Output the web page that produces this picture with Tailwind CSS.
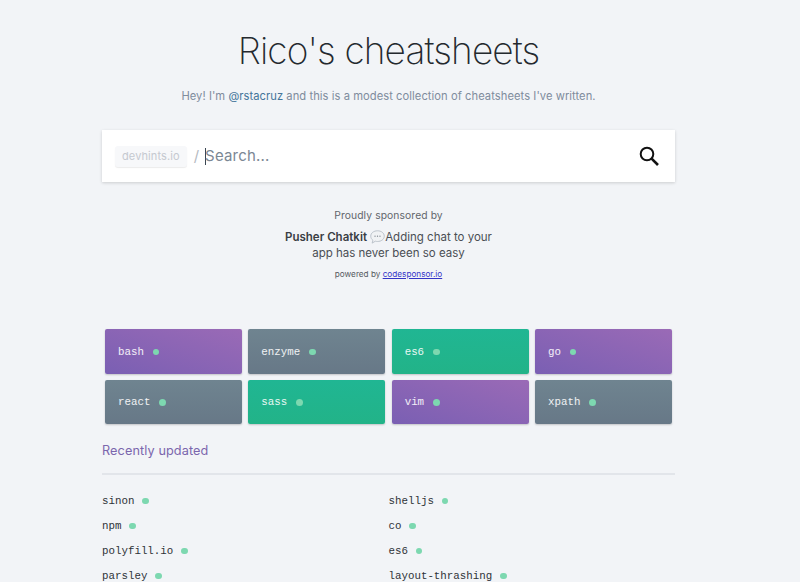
<!DOCTYPE html>
<html lang="en">
<head>
  <meta charset="UTF-8" />
  <title>Rico's cheatsheets</title>
  <script src="https://cdn.jsdelivr.net/npm/@tailwindcss/browser@4"></script>
</head>
<body class="bg-[#f2f4f7] h-[582px] overflow-hidden font-['Inter',sans-serif]">
  <div class="w-[573px] ml-[102px]">

    <!-- Header -->
    <h1 class="pt-[28px] h-[76px] text-center text-[37px] leading-[46px] font-extralight tracking-[-0.85px] text-[#24292e] whitespace-nowrap">Rico's cheatsheets</h1>
    <p class="mt-[11px] h-[18px] text-center text-[11.2px] leading-[18px] tracking-[0.05px] text-[#7f8c9d] whitespace-nowrap">Hey! I'm <a class="text-[#44749a]">@rstacruz</a> and this is a modest collection of cheatsheets I've written.</p>

    <!-- Search -->
    <div class="mt-[25px] h-[52px] bg-white shadow-[0_1px_3px_rgba(0,0,0,0.16)] flex items-center pl-[13px] pr-[15px]">
      <span class="h-[21px] px-[7px] rounded-[3px] bg-[#f7f8fa] shadow-[0_1px_1px_rgba(0,0,0,0.08)] text-[11px] leading-[21px] tracking-[0.1px] text-[#c5c9d0]">devhints.io</span>
      <span class="ml-[7px] text-[15px] text-[#b5bac2]">/</span>
      <span class="ml-[6px] w-px h-[17px] bg-[#3a4652]"></span>
      <span class="-ml-px pt-px text-[15px] tracking-[0.2px] text-[#7b8794]">Search...</span>
      <svg class="ml-auto" width="22" height="22" viewBox="0 0 22 22" fill="none" stroke="#111" stroke-width="2">
        <circle cx="9" cy="9" r="6.3" />
        <path d="M13.6 13.6 L20 20" stroke-width="2.6" />
      </svg>
    </div>

    <!-- Sponsor -->
    <div class="mt-[25px] text-center">
      <p class="text-[10.3px] leading-[16px] tracking-[0.1px] text-[#62666c]">Proudly sponsored by</p>
      <p class="mt-[6px] mx-auto w-[215px] text-[11.5px] leading-[16px] text-[#4a4e54]"><b class="font-semibold text-[#3a3e44]">Pusher Chatkit</b> <svg class="inline align-[-3px]" width="15" height="14" viewBox="0 0 14 13"><path d="M7 .7c3.400 0 6.300 2 6.300 5s-2.900 5-6.300 5c-.8 0-1.400-.1-2-.3L2 12.200l.7-2.600C1.500 8.700.7 7.300.7 5.700c0-3 2.900-5 6.300-5z" fill="#f0f2f4" stroke="#b4bcc4" stroke-width=".8" /><circle cx="4.700" cy="5.700" r=".6" fill="#7a828a" /><circle cx="7" cy="5.700" r=".6" fill="#7a828a" /><circle cx="9.300" cy="5.700" r=".6" fill="#7a828a" /></svg>Adding chat to your app has never been so easy</p>
      <p class="mt-[7px] text-[8.2px] leading-[12px] text-[#55595e]">powered by <a class="underline text-[#3434c8]">codesponsor.io</a></p>
    </div>

    <!-- Top sheets -->
    <div class="mt-[49px] px-[3px] grid grid-cols-4 gap-[6.33px] font-['Liberation_Mono',monospace] text-[10.8px] text-white/90">
      <a class="h-[44.500px] rounded-[2px] pl-[13px] pt-px flex items-center gap-[9px] shadow-[0_1px_2px_rgba(0,0,0,0.2)] bg-gradient-to-tr from-[#7a5fb3] to-[#9a6ab6]">bash <i class="size-[6.500px] rounded-full bg-[#7dd8b0]"></i></a>
      <a class="h-[44.500px] rounded-[2px] pl-[13px] pt-px flex items-center gap-[9px] shadow-[0_1px_2px_rgba(0,0,0,0.2)] bg-gradient-to-b from-[#6f8490] to-[#677887]">enzyme <i class="size-[6.500px] rounded-full bg-[#7dd8b0]"></i></a>
      <a class="h-[44.500px] rounded-[2px] pl-[13px] pt-px flex items-center gap-[9px] shadow-[0_1px_2px_rgba(0,0,0,0.2)] bg-gradient-to-b from-[#20b693] to-[#22b388]">es6 <i class="size-[6.500px] rounded-full bg-[#7dd8b0]"></i></a>
      <a class="h-[44.500px] rounded-[2px] pl-[13px] pt-px flex items-center gap-[9px] shadow-[0_1px_2px_rgba(0,0,0,0.2)] bg-gradient-to-tr from-[#7a5fb3] to-[#9a6ab6]">go <i class="size-[6.500px] rounded-full bg-[#7dd8b0]"></i></a>
      <a class="h-[44.500px] rounded-[2px] pl-[13px] pt-px flex items-center gap-[9px] shadow-[0_1px_2px_rgba(0,0,0,0.2)] bg-gradient-to-b from-[#6f8490] to-[#677887]">react <i class="size-[6.500px] rounded-full bg-[#7dd8b0]"></i></a>
      <a class="h-[44.500px] rounded-[2px] pl-[13px] pt-px flex items-center gap-[9px] shadow-[0_1px_2px_rgba(0,0,0,0.2)] bg-gradient-to-b from-[#20b693] to-[#22b388]">sass <i class="size-[6.500px] rounded-full bg-[#7dd8b0]"></i></a>
      <a class="h-[44.500px] rounded-[2px] pl-[13px] pt-px flex items-center gap-[9px] shadow-[0_1px_2px_rgba(0,0,0,0.2)] bg-gradient-to-tr from-[#7a5fb3] to-[#9a6ab6]">vim <i class="size-[6.500px] rounded-full bg-[#7dd8b0]"></i></a>
      <a class="h-[44.500px] rounded-[2px] pl-[13px] pt-px flex items-center gap-[9px] shadow-[0_1px_2px_rgba(0,0,0,0.2)] bg-gradient-to-b from-[#6f8490] to-[#677887]">xpath <i class="size-[6.500px] rounded-full bg-[#7dd8b0]"></i></a>
    </div>

    <!-- Recently updated -->
    <h2 class="mt-[18px] text-[12.7px] leading-[18px] tracking-[0.1px] text-[#7b66ad]">Recently updated</h2>
    <div class="mt-[13px] h-[2px] bg-[#e2e5ea]"></div>
    <div class="mt-[13px] grid grid-cols-2 auto-rows-[25px] font-['Liberation_Mono',monospace] text-[10.8px] text-[#2e3338]">
      <a class="flex items-center gap-[8px]">sinon <i class="size-[6.500px] rounded-full bg-[#7dd8b0]"></i></a>
      <a class="flex items-center gap-[8px]">shelljs <i class="size-[6.500px] rounded-full bg-[#7dd8b0]"></i></a>
      <a class="flex items-center gap-[8px]">npm <i class="size-[6.500px] rounded-full bg-[#7dd8b0]"></i></a>
      <a class="flex items-center gap-[8px]">co <i class="size-[6.500px] rounded-full bg-[#7dd8b0]"></i></a>
      <a class="flex items-center gap-[8px]">polyfill.io <i class="size-[6.500px] rounded-full bg-[#7dd8b0]"></i></a>
      <a class="flex items-center gap-[8px]">es6 <i class="size-[6.500px] rounded-full bg-[#7dd8b0]"></i></a>
      <a class="flex items-center gap-[8px]">parsley <i class="size-[6.500px] rounded-full bg-[#7dd8b0]"></i></a>
      <a class="flex items-center gap-[8px]">layout-thrashing <i class="size-[6.500px] rounded-full bg-[#7dd8b0]"></i></a>
    </div>
  </div>
</body>
</html>
